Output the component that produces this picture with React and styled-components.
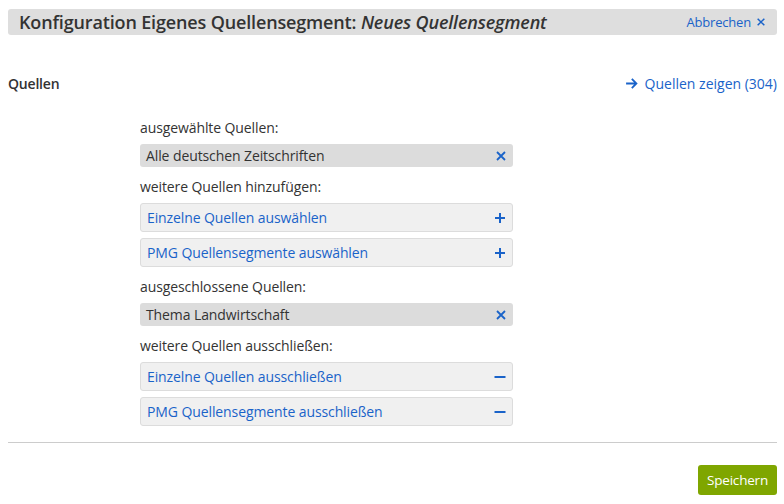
import React from 'react';
import styled, { createGlobalStyle } from 'styled-components';

const GlobalStyle = createGlobalStyle`
  body {
    margin: 0;
    background: #ffffff;
    font-family: "Open Sans", "Noto Sans", sans-serif;
    color: #333333;
  }
`;

const Page = styled.div`
  padding: 9px 7px 0 8px;
`;

const HeaderBar = styled.div`
  display: flex;
  align-items: center;
  justify-content: space-between;
  height: 26px;
  padding: 0 11px 0 11px;
  background-color: #dedede;
  border-radius: 3px;
`;

const Title = styled.h1`
  margin: 0;
  font-size: 18px;
  font-weight: 600;
  letter-spacing: -0.15px;
  color: #333333;
  em {
    font-weight: 600;
  }
`;

const Cancel = styled.a`
  display: flex;
  align-items: center;
  gap: 5px;
  font-size: 13px;
  color: #1a63c9;
  text-decoration: none;
  letter-spacing: -0.2px;
`;

const SectionHead = styled.div`
  display: flex;
  align-items: center;
  justify-content: space-between;
  margin-top: 38px;
  height: 20px;
`;

const SectionTitle = styled.div`
  font-size: 14px;
  font-weight: 600;
  letter-spacing: -0.2px;
`;

const ShowLink = styled.a`
  display: flex;
  align-items: center;
  gap: 7px;
  font-size: 14px;
  color: #1a63c9;
  letter-spacing: 0;
`;

const Column = styled.div`
  width: 373px;
  margin: 26px 0 0 132px;
  display: flex;
  flex-direction: column;
`;

const Label = styled.div`
  font-size: 14px;
  letter-spacing: -0.1px;
  height: 18px;
  line-height: 18px;
  margin-bottom: 7px;
  margin-top: ${p => (p.$first ? '0' : '11px')};
`;

const Chip = styled.div`
  display: flex;
  align-items: center;
  justify-content: space-between;
  height: 23px;
  padding: 0 6px 0 6px;
  background-color: #dcdcdc;
  border-radius: 3px;
  font-size: 14px;
  letter-spacing: -0.1px;
  color: #333333;
`;

const ActionBox = styled.div`
  display: flex;
  align-items: center;
  justify-content: space-between;
  height: 27px;
  padding: 0 6px 0 6px;
  margin-bottom: ${p => (p.$last ? '0' : '6px')};
  background-color: #f0f0f0;
  border: 1px solid #dcdcdc;
  border-radius: 3px;
  font-size: 14px;
  letter-spacing: -0.1px;
  color: #1a63c9;
`;

const Icon = styled.svg`
  width: 12px;
  height: 12px;
  flex: none;
`;

const Divider = styled.hr`
  margin: 16px 0 0 0;
  border: none;
  border-top: 1px solid #cccccc;
`;

const Footer = styled.div`
  display: flex;
  justify-content: flex-end;
  padding-top: 22px;
`;

const SaveButton = styled.button`
  height: 30px;
  padding: 0 9px;
  background-color: #7fa600;
  color: #ffffff;
  border: none;
  border-radius: 3px;
  font-family: inherit;
  font-size: 13.5px;
  letter-spacing: -0.2px;
  cursor: pointer;
`;

const CloseIcon = ({ size = 12 }) => (
  <Icon viewBox="0 0 12 12" style={{ width: size, height: size }}>
    <path d="M2 2 L10 10 M10 2 L2 10" stroke="#1a63c9" strokeWidth="1.8" fill="none" />
  </Icon>
);

const PlusIcon = () => (
  <Icon viewBox="0 0 12 12">
    <path d="M6 1 V11 M1 6 H11" stroke="#1a63c9" strokeWidth="2" fill="none" />
  </Icon>
);

const MinusIcon = () => (
  <Icon viewBox="0 0 12 12">
    <path d="M0.5 6 H11.5" stroke="#1a63c9" strokeWidth="2" fill="none" />
  </Icon>
);

const ArrowIcon = () => (
  <Icon viewBox="0 0 12 12" style={{ width: 13, height: 13 }}>
    <path d="M1 6 H10.5 M6.3 1.8 L10.5 6 L6.3 10.2" stroke="#1a63c9" strokeWidth="1.7" fill="none" />
  </Icon>
);

const App = () => {
  return (
    <>
      <GlobalStyle />
      <Page>
        <HeaderBar>
          <Title>
            Konfiguration Eigenes Quellensegment: <em>Neues Quellensegment</em>
          </Title>
          <Cancel>
            Abbrechen <CloseIcon size={10} />
          </Cancel>
        </HeaderBar>

        <SectionHead>
          <SectionTitle>Quellen</SectionTitle>
          <ShowLink>
            <ArrowIcon /> Quellen zeigen (304)
          </ShowLink>
        </SectionHead>

        <Column>
          <Label $first>ausgewählte Quellen:</Label>
          <Chip>
            Alle deutschen Zeitschriften <CloseIcon />
          </Chip>
          <Label>weitere Quellen hinzufügen:</Label>
          <ActionBox>
            Einzelne Quellen auswählen <PlusIcon />
          </ActionBox>
          <ActionBox $last>
            PMG Quellensegmente auswählen <PlusIcon />
          </ActionBox>

          <Label>ausgeschlossene Quellen:</Label>
          <Chip>
            Thema Landwirtschaft <CloseIcon />
          </Chip>
          <Label>weitere Quellen ausschließen:</Label>
          <ActionBox>
            Einzelne Quellen ausschließen <MinusIcon />
          </ActionBox>
          <ActionBox $last>
            PMG Quellensegmente ausschließen <MinusIcon />
          </ActionBox>
        </Column>

        <Divider />
        <Footer>
          <SaveButton>Speichern</SaveButton>
        </Footer>
      </Page>
    </>
  );
};

export default App;
